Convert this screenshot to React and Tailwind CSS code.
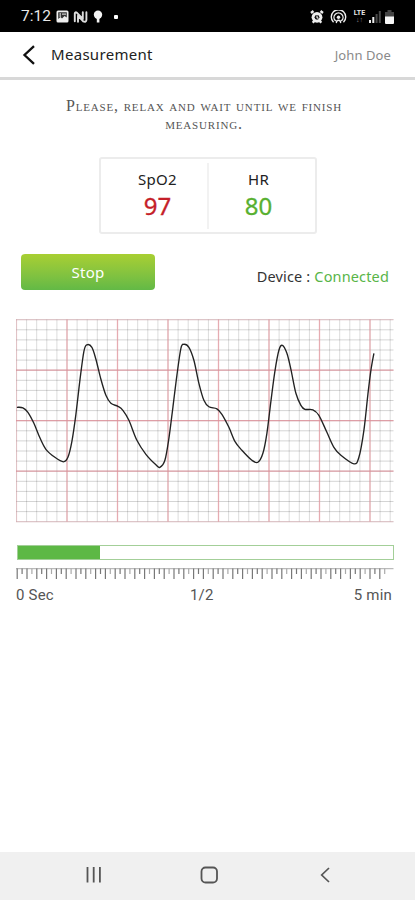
import React from 'react';

// Samples of the pulse wave, in chart pixels
const WAVE = [
  [0, 88], [6, 88.5], [11, 93], [17, 104], [23, 118.5], [29, 130], [38, 138], [46.5, 142.5], [51, 138], [55, 122],
  [59, 95], [63, 61], [67, 32], [70, 25.5], [75, 28], [79, 40], [84, 60], [89, 76], [94, 84], [101, 87],
  [106, 91], [112, 101], [120, 121], [129, 135], [139, 145.5], [143, 148], [148, 141], [152, 119], [156, 88], [160, 56],
  [164, 29], [167, 25], [172, 28], [177, 41], [182, 64], [187, 81], [192, 87.5], [200, 89.5], [205, 95], [212, 108],
  [218, 122], [225, 131], [235, 141], [241, 143], [246, 134], [250, 114], [254, 82], [258, 52], [262, 31], [265.5, 26],
  [270, 34], [274, 50], [279, 74], [284, 86], [288, 90], [296, 90.5], [302, 96], [310, 113], [317, 128], [324, 136],
  [337, 144.5], [342, 138], [347, 111], [351, 75], [354, 51], [357, 34],
];

const smoothPath = (pts) =>
  pts.slice(0, -1).reduce((d, p, i) => {
    const prev = pts[i - 1] || p;
    const next = pts[i + 1];
    const after = pts[i + 2] || next;
    const c1 = [p[0] + (next[0] - prev[0]) / 6, p[1] + (next[1] - prev[1]) / 6];
    const c2 = [next[0] - (after[0] - p[0]) / 6, next[1] - (after[1] - p[1]) / 6];
    return `${d} C${c1.join(',')} ${c2.join(',')} ${next.join(',')}`;
  }, `M${pts[0].join(',')}`);

const STEP = 10.1;
const columns = Array.from({ length: 38 }, (_, i) => i);
const rows = Array.from({ length: 21 }, (_, i) => i);
const ticks = Array.from({ length: 76 }, (_, i) => i);

function StatusBar() {
  return (
    <div className="h-8 shrink-0 bg-black text-[#e8e8e8] flex items-center justify-between pl-[21px] pr-[21px] pt-px">
      <div className="flex items-center">
        <span className="font-['Roboto'] text-[15.5px] leading-none w-[35px] pt-px">7:12</span>
        <svg width="13" height="13" viewBox="0 0 13 13" className="block">
          <rect x="0.5" y="0.5" width="12" height="12" rx="1.5" fill="#eee" />
          <path d="M2.2 2.2h8.6v5.3L8.5 6 6 8.5 4.5 7 2.2 9z" fill="#333" />
          <path d="M4.2 3v4M6 4.2h4" stroke="#ccc" strokeWidth="1.2" />
        </svg>
        <svg width="15" height="14" viewBox="0 0 15 14" fill="none" stroke="#ddd" strokeWidth="1.9" strokeLinejoin="round" strokeLinecap="round" className="block ml-[4px]">
          <path d="M1.8 11.2V3.4Q2.2 1.6 4 2.8L9.8 9V2.2" />
          <path d="M5 11.8V5.6L10.2 11.4Q13.2 12.6 13.4 10V2.2" />
        </svg>
        <svg width="10" height="13" viewBox="0 0 10 13" className="block ml-[5px]" fill="#f4f4f4">
          <circle cx="5" cy="4.7" r="4.2" />
          <path d="M3.8 8h2.6v4.5H3.8z" />
        </svg>
        <span className="ml-[11px] size-1 bg-white rounded-[1px]" />
      </div>
      <div className="flex items-center">
        <svg width="14" height="14" viewBox="0 0 14 14" className="block">
          <path d="M1 3l2.5-2M13 3l-2.5-2M2.8 12.7l1.5-2M11.2 12.7l-1.5-2" stroke="#eee" strokeWidth="2.4" />
          <circle cx="7" cy="7.3" r="5.4" fill="#eee" />
          <circle cx="7" cy="7.3" r="2.4" fill="#111" />
          <path d="M7 5.5v2.1l1.5.8" stroke="#eee" strokeWidth="1.1" fill="none" />
        </svg>
        <svg width="17" height="14" viewBox="0 0 17 14" fill="none" stroke="#eee" strokeWidth="1.4" strokeLinecap="round" className="block ml-[6px]">
          <path d="M3.2 11.8a7.2 7.2 0 1 1 10.6 0M5.3 10.6a4.5 4.5 0 1 1 6.4 0" />
          <circle cx="8.5" cy="7.2" r="1.7" fill="#eee" stroke="none" />
          <path d="M6.4 12.6c0-3.2 4.2-3.2 4.2 0" />
        </svg>
        <div className="ml-[6px] w-[13px] flex flex-col items-center font-['Roboto'] font-bold">
          <span className="text-[7px] leading-[7px]">LTE</span>
          <span className="text-[7px] leading-[6px] text-[#888]">↓↑</span>
        </div>
        <svg width="12" height="13" viewBox="0 0 12 13" className="block ml-[3px]">
          <path d="M0 10h2v3H0zM3.3 7h2v6h-2z" fill="#eee" />
          <path d="M6.6 4h2v9h-2zM9.8 1h2v12h-2z" fill="#4a4a4a" />
        </svg>
        <svg width="9" height="14" viewBox="0 0 9 14" className="block ml-[4px]">
          <path d="M2.5 0h4v2H9v5H0V2h2.5z" fill="#444" />
          <path d="M0 6.5h9V13a1 1 0 0 1-1 1H1a1 1 0 0 1-1-1z" fill="#f6f6f6" />
        </svg>
      </div>
    </div>
  );
}

function Reading({ label, value, className }) {
  return (
    <div className="w-[99px] flex flex-col items-center pt-[6px]">
      <span className="text-[15px] leading-5 text-[#222] tracking-[0.3px]">{label}</span>
      <span className={`text-[24px] leading-[34px] [-webkit-text-stroke:0.3px_currentColor] ${className}`}>{value}</span>
    </div>
  );
}

function Chart() {
  return (
    <svg width="378" height="204" viewBox="0 0 378 204" className="block" fill="none">
      {columns.map((i) => (
        <path key={`c${i}`} d={`M${0.5 + i * STEP} 0.5V202.5`} stroke="#000" strokeOpacity="0.14" />
      ))}
      {rows.map((i) => (
        <path key={`r${i}`} d={`M0 ${0.7 + i * STEP}H377.5`} stroke="#000" strokeOpacity="0.17" />
      ))}
      {columns.filter((i) => i % 5 === 0).map((i) => (
        <path key={`C${i}`} d={`M${0.5 + i * STEP} 0.5V202.5`} stroke="#e8a0a8" strokeOpacity={i === 0 ? 0.4 : 0.8} strokeWidth="1.3" />
      ))}
      {rows.filter((i) => i % 5 === 0).map((i) => (
        <path key={`R${i}`} d={`M0 ${0.7 + i * STEP}H377.5`} stroke="#de8f98" strokeOpacity={i % 20 === 0 ? 0.3 : 0.8} strokeWidth="1.3" />
      ))}
      <path d={smoothPath(WAVE)} transform="translate(0.9 0.3)" stroke="#222" strokeWidth="1.35" strokeLinejoin="round" />
    </svg>
  );
}

function Ruler() {
  return (
    <svg width="378" height="12" viewBox="0 0 378 12" className="block">
      <path d="M0 0.7H377.5" stroke="#aaa" strokeWidth="1" />
      {ticks.map((i) => (
        <path
          key={i}
          d={`M${1.2 + i * 4.9} 0.5V${i % 2 ? 6 : 11}`}
          stroke={i % 4 === 3 ? '#aaa' : '#777'}
          strokeWidth="1.2"
        />
      ))}
    </svg>
  );
}

export default function App() {
  return (
    <div className="w-[415px] h-[900px] bg-white flex flex-col overflow-hidden font-['Noto_Sans',sans-serif]">
      <StatusBar />

      <header className="h-[48px] shrink-0 border-b-[3px] border-[#d8d8d8] flex items-center justify-between pl-[22px] pr-[24px]">
        <div className="flex items-center">
          <svg width="14" height="20" viewBox="0 0 14 20" fill="none" stroke="#111" strokeWidth="2.3" className="block">
            <path d="M12 1.2L2.5 10l9.5 8.8" />
          </svg>
          <h1 className="ml-[15px] -mt-px text-[15px] leading-5 text-[#222] tracking-[0.3px]">Measurement</h1>
        </div>
        <span className="text-[13px] leading-5 text-[#8a8a8a] tracking-[0.1px]">John Doe</span>
      </header>

      <main className="flex-1 flex flex-col">
        <p className="mt-[17px] text-center pr-[7px] font-['Liberation_Serif',serif] [font-variant-caps:small-caps] text-[16px] leading-[18px] tracking-[0.83px] whitespace-nowrap text-[#555]">
          Please, relax and wait until we finish
          <br />
          measuring.
        </p>

        <section className="mt-[24px] ml-[99px] w-[218px] h-[77px] border-2 border-[#ececec] rounded-[3px] flex justify-center items-stretch pt-1 pb-[3px]">
          <Reading label="SpO2" value="97" className="text-[#c51f29]" />
          <div className="w-[2px] bg-[#f2f2f2]" />
          <Reading label="HR" value="80" className="text-[#58b030]" />
        </section>

        <div className="mt-5 pl-[21px] pr-[26px] flex items-start justify-between">
          <button className="w-[134px] h-[36px] rounded-[4px] bg-linear-to-b from-[#a8cf32] to-[#62b946] text-white text-[15px] tracking-[0.2px]">
            Stop
          </button>
          <p className="mt-[12px] text-[14.5px] leading-5 tracking-[0.15px] text-[#333]">
            Device : <span className="text-[#58b548]">Connected</span>
          </p>
        </div>

        <div className="mt-[29px] pl-[16px]">
          <Chart />
        </div>

        <div className="mt-[22px] ml-[17px] w-[377px] h-[15px] border border-[#a3cf98] bg-white">
          <div className="h-full bg-[#5db845]" style={{ width: `${(82 / 375) * 100}%` }} />
        </div>

        <div className="mt-[8px] pl-[16px]">
          <Ruler />
        </div>

        <div className="mt-[5px] pl-[16px] pr-[23px] flex justify-between font-['Roboto',sans-serif] text-[15px] leading-5 tracking-[0.2px] text-[#555]">
          <span>0 Sec</span>
          <span className="pr-1">1/2</span>
          <span>5 min</span>
        </div>
      </main>

      <nav className="h-[48px] shrink-0 bg-[#f0f0f0] flex items-center pb-[2px] text-[#555]">
        <svg width="16" height="16" viewBox="0 0 16 16" stroke="currentColor" strokeWidth="1.8" className="block ml-[86px]">
          <path d="M1.5 0v15.5M7.7 0v15.5M13.9 0v15.5" />
        </svg>
        <svg width="18" height="18" viewBox="0 0 18 18" fill="none" stroke="currentColor" strokeWidth="1.8" className="block ml-[98px]">
          <rect x="1.5" y="1.5" width="15.5" height="15" rx="4" />
        </svg>
        <svg width="10" height="16" viewBox="0 0 10 16" fill="none" stroke="currentColor" strokeWidth="1.7" className="block ml-[102px]">
          <path d="M9 1L1.7 8L9 15" />
        </svg>
      </nav>
    </div>
  );
}
